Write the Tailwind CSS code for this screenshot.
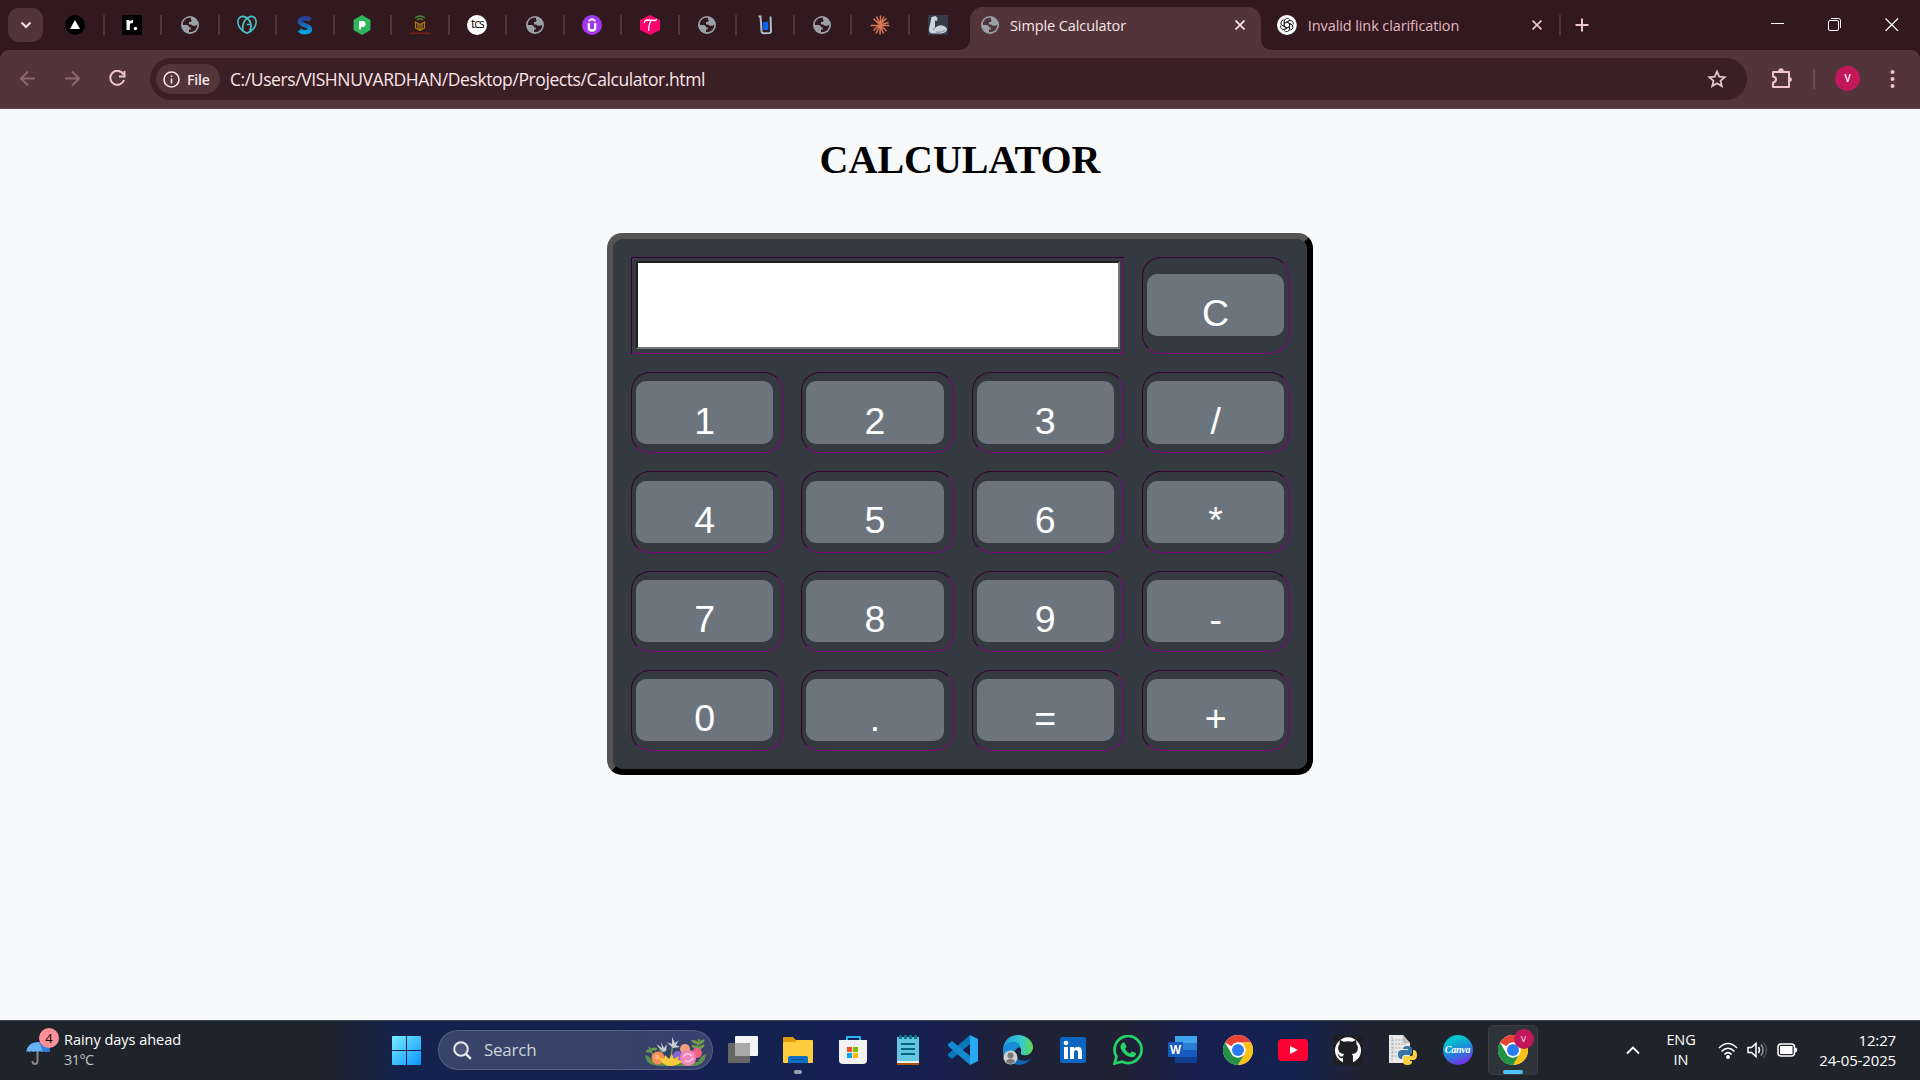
<!DOCTYPE html>
<html lang="en">
<head>
<meta charset="utf-8">
<title>Simple Calculator</title>
<script src="https://cdn.jsdelivr.net/npm/@tailwindcss/browser@4"></script>
</head>
<body class="w-[1920px] h-[1080px] overflow-hidden flex flex-col bg-[#f8f9fb] font-['Open_Sans','Noto_Sans',sans-serif]">

<!-- Shared icon symbols -->
<svg class="hidden">
  <symbol id="globe" viewBox="0 0 18 18"><circle cx="9" cy="9" r="9" fill="#9aa0a6"/><path d="M10 1.8C6.500 1 3 3.200 2 6.500c-.3 1-.2 1.900.1 2.500h3.200c1.800 0 2.900.900 2.900 2.400h1.600v2H8v2.600c3.500.6 7-1.600 8-5 .3-.9.200-1.700.1-2.500l-1.300 1.300h-3.100L10.300 8.400H8V6h1.500l1.700-2H10z" fill="#31191f"/></symbol>
  <symbol id="globe-active" viewBox="0 0 18 18"><circle cx="9" cy="9" r="9" fill="#9aa0a6"/><path d="M10 1.8C6.500 1 3 3.200 2 6.500c-.3 1-.2 1.900.1 2.500h3.200c1.800 0 2.900.900 2.900 2.400h1.600v2H8v2.600c3.500.6 7-1.600 8-5 .3-.9.200-1.700.1-2.500l-1.300 1.300h-3.100L10.300 8.400H8V6h1.500l1.700-2H10z" fill="#51353a"/></symbol>
  <symbol id="chrome" viewBox="0 0 30 30"><circle cx="15" cy="15" r="15" fill="#fff"/><path d="M15 0c5.600 0 10.400 3 13 7.500H15a7.500 7.500 0 0 0-6.500 3.800L2 7.500A15 15 0 0 1 15 0z" fill="#ea4335"/><path d="M28 7.500A15 15 0 0 1 15 30l6.500-11.300A7.500 7.500 0 0 0 21.500 11.200L20 7.500z" fill="#fbc116"/><path d="M2 7.500l6.500 11.200A7.500 7.500 0 0 0 21.500 18.700L15 30A15 15 0 0 1 2 7.500z" fill="#229342"/><circle cx="15" cy="15" r="7.500" fill="#fff"/><circle cx="15" cy="15" r="6" fill="#2b7cf0"/></symbol>
</svg>

<!-- Tab strip -->
<header class="h-[50px] shrink-0 bg-[#31191f] flex">
  <div class="w-[47px] shrink-0 pl-2 pt-2">
    <button class="w-[35px] h-[34px] rounded-[11px] bg-[#51353a] flex items-center justify-center"><svg class="size-3" viewBox="0 0 12 12" fill="none" stroke="#fbdfe4" stroke-width="2"><path d="M1.500 3.500L6 8l4.500-4.500"/></svg></button>
  </div>
  <div class="w-[920px] shrink-0 grid grid-cols-16 h-[50px] items-center text-center">
    <div class="flex justify-center h-5 border-r-2 border-[#51353a]"><svg class="size-5" viewBox="0 0 20 20"><circle cx="10" cy="10" r="10" fill="#000"/><path d="M10 5l5 9H5z" fill="#fff"/></svg></div>
    <div class="flex justify-center h-5 border-r-2 border-[#51353a]"><svg class="size-5" viewBox="0 0 20 20"><rect width="20" height="20" rx="1" fill="#000"/><path d="M4.500 5h3v1.500Q8.500 4.800 11 5v3Q7.800 7.700 7.800 10v5H4.500z" fill="#fff"/><circle cx="13.500" cy="13.500" r="1.700" fill="#fff"/></svg></div>
    <div class="flex justify-center items-center h-5 border-r-2 border-[#51353a]"><svg class="size-[18px]"><use href="#globe"/></svg></div>
    <div class="flex justify-center h-5 border-r-2 border-[#51353a]"><svg class="size-5" viewBox="0 0 20 20" fill="none" stroke="#4cc3c9" stroke-width="1.700"><path d="M10 3C7.500.8 4 .8 2.300 2.800 0 5.500.9 10 3.200 13.300 5 15.800 7.500 17.300 10 18.200c2.500-.9 5-2.400 6.800-4.900C19.100 10 20 5.500 17.700 2.800 15.500.5 11 1.300 8.500 4.600 6 8 5.200 12 6.300 14.600"/><path d="M10 3c3 2.500 4.500 6 3.900 9.500-.2 1.300-.5 2-1.200 2.900M9.800 9.500h3.500"/></svg></div>
    <div class="flex justify-center h-5 border-r-2 border-[#51353a]"><svg class="size-5" viewBox="0 0 20 20"><defs><linearGradient id="sg" x2="0" y2="1"><stop stop-color="#273d91"/><stop offset="1" stop-color="#009fe8"/></linearGradient></defs><path d="M15.500 4.500C13 2.500 5 2.500 5 6.500s10 3.500 10 7.500-8 4-10.500 1" fill="none" stroke="url(#sg)" stroke-width="4.500"/></svg></div>
    <div class="flex justify-center h-5 border-r-2 border-[#51353a]"><svg class="size-5" viewBox="0 0 20 20"><path d="M10 0l8.500 5v10L10 20l-8.500-5V5z" fill="#2fb65a"/><path d="M8 14.500V7h2.500a2 2 0 0 1 0 4H8" fill="#fff" stroke="#fff" stroke-width="2"/></svg></div>
    <div class="flex justify-center h-5 border-r-2 border-[#51353a]"><svg class="size-5" viewBox="0 0 20 20" fill="none"><path d="M5 3q5-4 10 0M7 5q3-2.500 6 0" stroke="#4c8a30" stroke-width="1.300"/><path d="M5.500 7l4.500 2.500L14.500 7v6L10 15.500 5.500 13zM10 9.500V15M8 8.500v5.500M12 8.500v5.500" stroke="#a97912" stroke-width="1.200"/><path d="M0 18.300h20" stroke="#8d1d1b" stroke-width="1.500" stroke-dasharray="1.300 .4"/></svg></div>
    <div class="flex justify-center h-5 border-r-2 border-[#51353a]"><span class="size-5 rounded-full bg-white text-black text-[12px] leading-[18px] tracking-[-1px]">tcs</span></div>
    <div class="flex justify-center items-center h-5 border-r-2 border-[#51353a]"><svg class="size-[18px]"><use href="#globe"/></svg></div>
    <div class="flex justify-center h-5 border-r-2 border-[#51353a]"><svg class="size-5" viewBox="0 0 20 20" fill="none" stroke="#fff"><circle cx="10" cy="10" r="10" fill="#a435f0" stroke="none"/><path d="M6.800 8v5q0 2.500 3.200 2.500t3.200-2.500V8" stroke-width="2.300"/><path d="M6.500 6L10 4l3.500 2" stroke-width="1.700"/></svg></div>
    <div class="flex justify-center h-5 border-r-2 border-[#51353a]"><svg class="size-5" viewBox="0 0 20 20"><path d="M10 0l10 5v10l-10 5-10-5V5z" fill="#fc036f"/><path d="M4.500 8Q4 5 8 5l7 .500Q17 5 16 4M11 5.500Q9 9 8.500 16" fill="none" stroke="#fff" stroke-width="1.300"/></svg></div>
    <div class="flex justify-center items-center h-5 border-r-2 border-[#51353a]"><svg class="size-[18px]"><use href="#globe"/></svg></div>
    <div class="flex justify-center h-5 border-r-2 border-[#51353a]"><svg class="size-5" viewBox="0 0 20 20"><path d="M3.500 1.500h2l1 14.500q0 2.500 2.500 2.300l5-.3q2.300-.2 2-2.500L15.500 1.500" fill="none" stroke="#adbdc9" stroke-width="2"/><path d="M7.500 7.500l5.500-1 .5 8.500H8.300z" fill="#0768f6"/></svg></div>
    <div class="flex justify-center items-center h-5 border-r-2 border-[#51353a]"><svg class="size-[18px]"><use href="#globe"/></svg></div>
    <div class="flex justify-center h-5 border-r-2 border-[#51353a]"><svg class="size-5" viewBox="0 0 20 20" stroke="#d97757" stroke-width="1.500"><path d="M10.500 .5L10 19.500M.5 10.500h19M3.500 3.800L16.500 16M16.500 3.300L3.500 15.500M6.500 1.500L13.500 18.500M14 1.500L6 18.500M18.500 7.500L10 10"/></svg></div>
    <div class="flex justify-center h-5"><svg class="size-5" viewBox="0 0 20 20"><path d="M0 0h20v20H0z" fill="#353b4a"/><path d="M3.500 2l4-1 2 2-.5 3-2-.5L7 13q3-3.500 7.500-2.500 4 1 4.500 4-.5 3.500-6 4H4q-3-.5-3-4.500z" fill="#c9d4db"/><path d="M7 13l-2 2M8 17q6 1 9-2" stroke="#91a2b0" stroke-width="1.300" fill="none"/></svg></div>
  </div>
  <div class="relative ml-[3px] mt-[7px] w-[291px] h-[43px] shrink-0 rounded-t-[13px] bg-[#51353a] flex items-center pl-[11px] pb-[7px]">
    <svg class="absolute -left-3 bottom-0 size-3" viewBox="0 0 12 12"><path d="M12 0v12H0Q12 12 12 0z" fill="#51353a"/></svg>
    <svg class="absolute -right-3 bottom-0 size-3" viewBox="0 0 12 12"><path d="M0 0v12h12Q0 12 0 0z" fill="#51353a"/></svg>
    <svg class="size-[18px]"><use href="#globe-active"/></svg>
    <span class="ml-[11px] w-[225px] pt-0.5 text-[14.500px] tracking-[-0.1px] text-[#fbe5e8]">Simple Calculator</span>
    <svg class="size-[10px] shrink-0" viewBox="0 0 10 10" stroke="#fbe5e8" stroke-width="1.700"><path d="M.5.5l9 9M9.500.5l-9 9"/></svg>
  </div>
  <div class="ml-4 w-[284px] h-[50px] shrink-0 flex items-center">
    <svg class="size-5" viewBox="0 0 20 20" fill="none" stroke="#222" stroke-width=".9"><circle cx="10" cy="10" r="10" fill="#fff" stroke="none"/><g id="knot"><path d="M7.300 11.500V6.200a3 3 0 0 1 5.400-1.700M7.300 8.500l4.500-2.600a3 3 0 0 1 2.300-.3"/></g><use href="#knot" transform="rotate(60 10 10)"/><use href="#knot" transform="rotate(120 10 10)"/><use href="#knot" transform="rotate(180 10 10)"/><use href="#knot" transform="rotate(240 10 10)"/><use href="#knot" transform="rotate(300 10 10)"/></svg>
    <span class="ml-[11px] w-[225px] pt-0.5 text-[14.500px] tracking-[-0.1px] text-[#e5b8c3]">Invalid link clarification</span>
    <svg class="ml-[1px] size-[10px]" viewBox="0 0 10 10" stroke="#f2c4ce" stroke-width="1.700"><path d="M.5.5l9 9M9.500.5l-9 9"/></svg>
    <span class="ml-[17px] w-0.5 h-5 bg-[#51353a]"></span>
  </div>
  <svg class="ml-[14px] mt-[18px] size-[14px]" viewBox="0 0 14 14" stroke="#f2c4ce" stroke-width="2"><path d="M7 .5v13M.5 7h13"/></svg>
  <div class="ml-auto mr-[21px] mt-[17px] flex gap-[43px]">
    <svg class="size-[14px]" viewBox="0 0 14 14" stroke="#fff"><path d="M0 6.500h13"/></svg>
    <svg class="size-[14px]" viewBox="0 0 14 14" fill="none" stroke="#fff"><rect x=".5" y="3.500" width="10" height="10" rx="1.500"/><path d="M3 1.500h7.500q2 0 2 2V11"/></svg>
    <svg class="size-[14px]" viewBox="0 0 14 14" stroke="#fff" stroke-width="1.200"><path d="M.5 1.500l12.500 12.500M13 1.500L.5 14"/></svg>
  </div>
</header>

<!-- Toolbar -->
<div class="h-[59px] shrink-0 bg-[#31191f]">
  <div class="h-[59px] rounded-t-[9px] bg-[#51353a] flex items-start border-b border-[#5d464b]">
    <div class="w-[150px] pl-[19px] pt-5 flex gap-[28px] shrink-0">
      <svg class="size-[17px]" viewBox="0 0 17 17" fill="none" stroke="#8b6870" stroke-width="2"><path d="M16 8.500H2M9 1.500l-7 7 7 7"/></svg>
      <svg class="size-[17px]" viewBox="0 0 17 17" fill="none" stroke="#8b6870" stroke-width="2"><path d="M1 8.500h14M8 1.500l7 7-7 7"/></svg>
      <svg class="size-[17px]" viewBox="0 0 17 17" fill="none" stroke="#f2c4ce" stroke-width="2"><path d="M14.500 4.500A7 7 0 1 0 15 10M15.500 1v5.500H10"/></svg>
    </div>
    <div class="mt-2 w-[1597px] h-[42px] shrink-0 rounded-full bg-[#3a1f25] flex items-center pl-1.5">
      <div class="w-[64px] h-[30px] rounded-full bg-[#51353a] flex items-center pl-[7px] gap-[7px] text-[14px] font-semibold tracking-[-0.2px] text-[#fbe5e8]"><svg class="size-[17px]" viewBox="0 0 17 17" fill="none" stroke="#fbe5e8" stroke-width="1.600"><circle cx="8.500" cy="8.500" r="7.500"/><path d="M8.500 7.500v5M8.500 4.500v1.600"/></svg>File</div>
      <span class="ml-[10px] text-[17.500px] tracking-[-0.41px] text-[#fbe5e8] whitespace-nowrap">C:/Users/VISHNUVARDHAN/Desktop/Projects/Calculator.html</span>
      <svg class="ml-auto mr-5 size-5" viewBox="0 0 20 20" fill="none" stroke="#dfc8cc" stroke-width="1.800"><path d="M10 2.500l2.200 5.100 5.500.5-4.200 3.600 1.300 5.400L10 14.200l-4.800 2.900 1.300-5.400-4.200-3.600 5.500-.5z"/></svg>
    </div>
    <svg class="ml-6 mt-[18px] size-[21px]" viewBox="0 0 21 21" fill="none" stroke="#f2c4ce" stroke-width="2"><path d="M2 4h16v15H2v-4.500q3-.5 3-3T2 8.500z" stroke-linejoin="round"/><path d="M7.300 3a2.700 2.700 0 0 1 5.400 0M18.500 9a2.500 2.500 0 0 1 0 5" fill="#f2c4ce" stroke="none"/></svg>
    <span class="ml-[21px] mt-[19px] w-0.5 h-5 bg-[#6d4e54]"></span>
    <span class="ml-5 mt-4 size-[25px] rounded-full bg-[#c2185b] text-white text-[10px] font-semibold leading-[24px] text-center">V</span>
    <svg class="ml-[30px] mt-[19px] w-[5px] h-5" viewBox="0 0 5 20" fill="#f2c4ce"><circle cx="2.500" cy="3" r="2"/><circle cx="2.500" cy="10" r="2"/><circle cx="2.500" cy="17" r="2"/></svg>
  </div>
</div>

<!-- Calculator page -->
<main class="h-[911px] shrink-0 flex flex-col items-center">
  <h1 class="mt-[28px] h-[46px] leading-[46px] text-[40px] font-bold text-black font-['Liberation_Serif',serif]">CALCULATOR</h1>
  <div class="mt-[50px] w-[706px] h-[542px] rounded-[15px] border-6 border-t-[#555] border-l-[#555] border-r-black border-b-black bg-[#343a40] p-[18px] grid grid-cols-[152.300px_152.300px_152.300px_147px] grid-rows-[97px_repeat(4,81.250px)] gap-[18px] text-[37.500px] leading-[43px] text-white font-['Liberation_Sans',Arial,sans-serif]">
    <div class="col-span-3 border border-t-[#330033] border-l-[#330033] border-r-[#800080] border-b-[#800080] pl-1 py-[3px]"><input class="block w-[484px] h-[88px] bg-white border-2 border-t-[#212121] border-l-[#212121] border-r-[#767676] border-b-[#767676]" type="text" readonly></div>
    <div class="rounded-[19px] border border-t-[#330033] border-l-[#330033] border-r-[#800080] border-b-[#800080] pl-1 flex items-center"><button class="w-[137.500px] h-[62px] -mt-px rounded-[10px] bg-[#6c757d] pt-[17px]">C</button></div>
    <div class="rounded-[19px] border border-t-[#330033] border-l-[#330033] border-r-[#800080] border-b-[#800080] pl-1 flex items-center"><button class="w-[137.300px] h-[62.500px] rounded-[10px] bg-[#6c757d] pt-[17px]">1</button></div>
    <div class="rounded-[19px] border border-t-[#330033] border-l-[#330033] border-r-[#800080] border-b-[#800080] pl-1 flex items-center"><button class="w-[137.300px] h-[62.500px] rounded-[10px] bg-[#6c757d] pt-[17px]">2</button></div>
    <div class="rounded-[19px] border border-t-[#330033] border-l-[#330033] border-r-[#800080] border-b-[#800080] pl-1 flex items-center"><button class="w-[137.300px] h-[62.500px] rounded-[10px] bg-[#6c757d] pt-[17px]">3</button></div>
    <div class="rounded-[19px] border border-t-[#330033] border-l-[#330033] border-r-[#800080] border-b-[#800080] pl-1 flex items-center"><button class="w-[137.500px] h-[62.500px] rounded-[10px] bg-[#6c757d] pt-[17px]">/</button></div>
    <div class="rounded-[19px] border border-t-[#330033] border-l-[#330033] border-r-[#800080] border-b-[#800080] pl-1 flex items-center"><button class="w-[137.300px] h-[62.500px] rounded-[10px] bg-[#6c757d] pt-[17px]">4</button></div>
    <div class="rounded-[19px] border border-t-[#330033] border-l-[#330033] border-r-[#800080] border-b-[#800080] pl-1 flex items-center"><button class="w-[137.300px] h-[62.500px] rounded-[10px] bg-[#6c757d] pt-[17px]">5</button></div>
    <div class="rounded-[19px] border border-t-[#330033] border-l-[#330033] border-r-[#800080] border-b-[#800080] pl-1 flex items-center"><button class="w-[137.300px] h-[62.500px] rounded-[10px] bg-[#6c757d] pt-[17px]">6</button></div>
    <div class="rounded-[19px] border border-t-[#330033] border-l-[#330033] border-r-[#800080] border-b-[#800080] pl-1 flex items-center"><button class="w-[137.500px] h-[62.500px] rounded-[10px] bg-[#6c757d] pt-[17px]">*</button></div>
    <div class="rounded-[19px] border border-t-[#330033] border-l-[#330033] border-r-[#800080] border-b-[#800080] pl-1 flex items-center"><button class="w-[137.300px] h-[62.500px] rounded-[10px] bg-[#6c757d] pt-4">7</button></div>
    <div class="rounded-[19px] border border-t-[#330033] border-l-[#330033] border-r-[#800080] border-b-[#800080] pl-1 flex items-center"><button class="w-[137.300px] h-[62.500px] rounded-[10px] bg-[#6c757d] pt-4">8</button></div>
    <div class="rounded-[19px] border border-t-[#330033] border-l-[#330033] border-r-[#800080] border-b-[#800080] pl-1 flex items-center"><button class="w-[137.300px] h-[62.500px] rounded-[10px] bg-[#6c757d] pt-4">9</button></div>
    <div class="rounded-[19px] border border-t-[#330033] border-l-[#330033] border-r-[#800080] border-b-[#800080] pl-1 flex items-center"><button class="w-[137.500px] h-[62.500px] rounded-[10px] bg-[#6c757d] pt-4">-</button></div>
    <div class="rounded-[19px] border border-t-[#330033] border-l-[#330033] border-r-[#800080] border-b-[#800080] pl-1 flex items-center"><button class="w-[137.300px] h-[62px] -mt-px rounded-[10px] bg-[#6c757d] pt-[17px]">0</button></div>
    <div class="rounded-[19px] border border-t-[#330033] border-l-[#330033] border-r-[#800080] border-b-[#800080] pl-1 flex items-center"><button class="w-[137.300px] h-[62px] -mt-px rounded-[10px] bg-[#6c757d] pt-[17px]">.</button></div>
    <div class="rounded-[19px] border border-t-[#330033] border-l-[#330033] border-r-[#800080] border-b-[#800080] pl-1 flex items-center"><button class="w-[137.300px] h-[62px] -mt-px rounded-[10px] bg-[#6c757d] pt-[17px]">=</button></div>
    <div class="rounded-[19px] border border-t-[#330033] border-l-[#330033] border-r-[#800080] border-b-[#800080] pl-1 flex items-center"><button class="w-[137.500px] h-[62px] -mt-px rounded-[10px] bg-[#6c757d] pt-[17px]">+</button></div>
  </div>
</main>

<!-- Taskbar -->
<footer class="h-[60px] shrink-0 border-t border-[#3c4654] flex items-center pb-px bg-[linear-gradient(90deg,#1f242b_0px,#1e242e_330px,#14234e_400px,#14234e_620px,#161f55_680px,#14234e_760px,#161f55_840px,#171f50_930px,#1e2136_1010px,#202234_1120px,#161f50_1200px,#14234e_1300px,#1f2231_1360px,#1f242b_1420px)]">
  <div class="w-[379px] shrink-0 flex h-[58px]">
    <div class="relative w-[64px] h-[58px]">
      <svg class="absolute left-[25px] top-[17px] w-[27px] h-[28px]" viewBox="0 0 27 28"><path d="M12.500 12v11q0 3-2.500 3t-2.500-3" fill="none" stroke="#8b8583" stroke-width="2"/><path d="M1 14Q3 4 13 4t12 10q-2-1.500-4 0-2-1.500-4 0-2-1.500-4.500 0-2-1.500-4 0-2-1.500-4 0-2-1.500-3.500 0z" fill="#68b2f7"/><path d="M13 4q12 0 12 10-2-1.500-4 0-2-1.500-4 0Q17 7 13 4z" fill="#2c83dc"/></svg>
      <span class="absolute left-[39px] top-[7px] size-5 rounded-full bg-[#ff8f98] text-[13px] leading-5 text-center text-black">4</span>
    </div>
    <div class="pt-[9px] text-[14.500px] leading-5 tracking-[-0.03px] text-white whitespace-nowrap">Rainy days ahead<div class="text-[#c4c5c8] tracking-[-0.600px]">31°C</div></div>
  </div>
  <div class="w-[55px] shrink-0 flex justify-center"><svg class="size-[29px]" viewBox="0 0 29 29"><defs><linearGradient id="win" x2="1" y2="1"><stop stop-color="#76edff"/><stop offset="1" stop-color="#0a94fc"/></linearGradient></defs><path d="M1 0h13v14H0V1q0-1 1-1zM15 0h13q1 0 1 1v13H15zM0 15h14v14H1q-1 0-1-1zM15 15h14v13q0 1-1 1H15z" fill="url(#win)"/></svg></div>
  <div class="ml-1 w-[275px] h-[40px] shrink-0 rounded-full border border-white/15 bg-white/15 flex items-center pl-[14px] pr-1.5">
    <svg class="size-[19px]" viewBox="0 0 19 19" fill="#ffffff18" stroke="#e9eaf0" stroke-width="2"><circle cx="8" cy="8" r="6.800"/><path d="M12.800 12.800l5 5" stroke-width="2.500"/></svg>
    <span class="ml-3 text-[17px] tracking-[-0.25px] text-[#d0d3de]">Search</span>
    <svg class="ml-auto mt-1 w-[61px] h-[30px]" viewBox="0 0 61 30"><path d="M0 18q4 0 8 7l45 0q3-7 8-8-1 12-14 12H16Q1 29 0 18z" fill="#5d8f4b"/><path d="M12 26L4 10M51 18l3-16M26 20l2-15M18 18L13 8" stroke="#6f9b4c" stroke-width="1.500"/><g fill="#6f9b4c"><ellipse cx="4" cy="14" rx="3" ry="1.500"/><ellipse cx="9" cy="12" rx="3" ry="1.500"/><ellipse cx="50" cy="5" rx="4" ry="1.600" transform="rotate(25 50 5)"/><ellipse cx="56" cy="5" rx="4" ry="1.600" transform="rotate(-30 56 5)"/><ellipse cx="50" cy="10" rx="4" ry="1.600" transform="rotate(25 50 10)"/><ellipse cx="56" cy="10" rx="4" ry="1.600" transform="rotate(-30 56 10)"/></g><path d="M18 15L11 7l6 4-1-6 3 6 3-4-1 7zM28 11l-6-6 5 2 0-7 3 6 4-3-3 5 4 2z" fill="#c9cbd2"/><circle cx="33" cy="19" r="5" fill="#8264d2"/><circle cx="40" cy="12" r="5" fill="#f3a17c"/><circle cx="52" cy="16" r="5" fill="#f0627e"/><circle cx="13" cy="21" r="6.500" fill="#f48f54"/><circle cx="12" cy="20" r="2.500" fill="#ffb07a"/><circle cx="43" cy="21" r="8" fill="#f083b8"/><path d="M38 20q4-6 9-1M40 24q5 2 8-3" stroke="#ffc1dc" stroke-width="2" fill="none"/><path d="M13 20l6 2 1-4 4 4 3-5 2 5 5-3-1 4 5 1q-6 5-13 5t-12-9z" fill="#f6ca3b"/></svg>
  </div>
  <div class="ml-[2px] w-[825px] h-[58px] shrink-0 grid grid-cols-15 place-items-center">
    <svg class="size-[30px]" viewBox="0 0 30 30"><rect y="8" width="22" height="20" rx="1" fill="#666"/><rect x="7" y="1" width="23" height="20" rx="1" fill="#f4f4f4"/><path d="M7 8h15v13H7z" fill="#aaa"/></svg>
    <div class="relative size-[30px]"><svg class="size-[30px]" viewBox="0 0 30 30"><path d="M0 3q0-1 1-1h9l3 3h10v7H0z" fill="#dd9c08"/><path d="M12 7l2-2h15q1 0 1 1v21q0 1-1 1H1q-1 0-1-1V8q0-1 1-1z" fill="#ffcc3d"/><path d="M5 28v-5q0-2 2-2h16q2 0 2 2v5z" fill="#0c70c4"/><path d="M8 24.500h13" stroke="#0a4b8c"/></svg><span class="absolute left-[11px] top-[35px] w-2 h-1 rounded-full bg-[#9a9fac]"></span></div>
    <svg class="size-[30px]" viewBox="0 0 30 30"><path d="M9 7V2h13v5" fill="none" stroke="#22b7f1" stroke-width="2"/><path d="M1 5h28v20q0 4-4 4H5q-4 0-4-4z" fill="#f2f2f2"/><path d="M9 12h5v5H9z" fill="#f25022"/><path d="M15 12h5v5h-5z" fill="#7fba00"/><path d="M9 18h5v5H9z" fill="#00a4ef"/><path d="M15 18h5v5h-5z" fill="#ffb900"/></svg>
    <svg class="size-[30px]" viewBox="0 0 30 30"><path d="M4 2h22v25H4z" fill="#62c8e0"/><path d="M4 26h22v2H4z" fill="#eee"/><path d="M4 28h22v2H4z" fill="#a9550b"/><path d="M8 9h14M8 14h14M8 19h14" stroke="#08637f" stroke-width="2"/><path d="M7.500 0v4M12.500 0v4M17.500 0v4M22.500 0v4" stroke="#13708e" stroke-width="3"/></svg>
    <svg class="size-[30px]" viewBox="0 0 30 30"><path d="M22 0v9L4 24l-4-3v-2z" fill="#0877b9"/><path d="M22 30v-9L4 6 0 9v2z" fill="#1389cf"/><path d="M22 0l8 4v22l-8 4z" fill="#29a8f3"/></svg>
    <svg class="size-[30px]" viewBox="0 0 30 30"><defs><linearGradient id="ed" x2="1"><stop stop-color="#1b9ee2"/><stop offset=".6" stop-color="#36c8d0"/><stop offset="1" stop-color="#62db4b"/></linearGradient></defs><path d="M0 14C1 5 7 0 15 0s15 6 15 12-5 9-10 8c-4-1-1-3-2-6-1-4-10-7-18 0z" fill="url(#ed)"/><path d="M0 14c3-8 16-9 17-2-6 1-7 7-3 11 4 4 11 3 14 0-4 7-12 8-17 6C4 27 0 21 0 14z" fill="#0c65b5"/><path d="M0 14c3-8 16-9 17-2-7 2-7 9-4 13l-8 1q-6-5-5-12z" fill="#188cd7"/><circle cx="7.500" cy="22.500" r="7" fill="#d0d0d0"/><circle cx="7.500" cy="20.500" r="3" fill="#777"/><path d="M3 27q0-3 4.500-3t4.500 3q-4 4-9 0z" fill="#777"/></svg>
    <svg class="size-[26px]" viewBox="0 0 26 26"><rect width="26" height="26" rx="2" fill="#0a66c2"/><circle cx="6" cy="6" r="2.300" fill="#fff"/><path d="M4 10h4v12H4zM10 10h4v1.700q1.300-2 4-2 4 0 4 5.300v7h-4v-6.500q0-2.500-2-2.500t-2 2.500V22h-4z" fill="#fff"/></svg>
    <svg class="size-[30px]" viewBox="0 0 30 30"><path d="M1.500 28.500l2-7A13.500 13.500 0 1 1 9 26.600z" fill="none" stroke="#25d366" stroke-width="2.700"/><path d="M10 7.500h1.500l2 4.200-1.500 2.300q2 3.500 5 4.500l2-2.200 4 2q0 4-4.500 4C12 21.500 7 15 7.500 11q.3-2.500 2.500-3.500z" fill="#25d366"/></svg>
    <svg class="size-[30px]" viewBox="0 0 30 30"><path d="M7 1h22v7H7z" fill="#41a5ee"/><path d="M7 8h22v7H7z" fill="#2b7cd3"/><path d="M7 15h22v7H7z" fill="#185abd"/><path d="M7 22h22v6H7z" fill="#103f91"/><rect y="7" width="15" height="15" rx="1" fill="#185abd"/><text x="7.500" y="18.500" text-anchor="middle" font-family="Open Sans" font-size="11.500" font-weight="700" fill="#fff">W</text></svg>
    <svg class="size-[30px]"><use href="#chrome"/></svg>
    <svg class="w-[30px] h-[22px]" viewBox="0 0 30 22"><rect width="30" height="22" rx="4" fill="#f03"/><path d="M12 7l8 4-8 4z" fill="#fff"/></svg>
    <svg class="size-[30px]" viewBox="0 0 30 30"><path d="M0 0h30v30H0z" fill="#201e22"/><path d="M10 27.300A13 13 0 1 1 20 27.300V22q0-2-1.200-3c4-.4 6-2 6-6 0-2-.5-3-1.500-4 .3-1.500.2-2.500-.3-3.700-1 0-2 .5-3.500 1.500q-4.500-1-9 0C9 5.800 8 5.300 7 5.300 6.500 6.500 6.400 7.500 6.700 9c-1 1-1.500 2-1.500 4 0 4 2 5.600 6 6q-1 1-1.200 2.300c-2 .8-3 0-4-1.300q-1-1-2-1 1 1 1.500 2 1.500 3 4.500 2z" fill="#fff"/></svg>
    <svg class="size-[30px]" viewBox="0 0 30 30"><path d="M1 0h14l7 8v20H1z" fill="#e9e9e9"/><path d="M4 2v25M4 5h11M4 9h14M4 13h10M4 17h7M4 21h7" stroke="#aaa" stroke-dasharray="2 1"/><path d="M15 0l7 8h-7z" fill="#bcbcbc"/><path d="M15 14q0-3 4.500-3t4.500 3v4q0 2-2 2h-5q-3 0-3 4-4 0-4-4.500t4-4.500h6v-1z" fill="#3774a8"/><path d="M25 15q4 0 4 5t-4 5h-5v1h4v1q0 3-4.500 3t-4.500-3v-4q0-2 2-2h5q3 0 3-2z" fill="#ffd340"/></svg>
    <div class="size-[30px] rounded-full bg-[linear-gradient(160deg,#00c4cc_20%,#2b76df_60%,#7d2ae8_90%)] text-white text-[10px] leading-[29px] text-center italic font-bold font-['Liberation_Serif',serif] tracking-[-0.200px]">Canva</div>
    <div class="relative w-[50px] h-[50px] rounded-[5px] border border-white/5 bg-white/7 flex items-center justify-center"><svg class="size-[30px]"><use href="#chrome"/></svg><span class="absolute left-[25px] top-[3px] size-5 rounded-full bg-[#c2185b] text-[#f4c2d4] text-[9px] leading-5 text-center font-semibold">V</span><span class="absolute left-[14px] bottom-0 w-5 h-1 rounded-full bg-[#4cc2ff]"></span></div>
  </div>
  <svg class="ml-[86px] size-[14px] shrink-0" viewBox="0 0 14 14" fill="none" stroke="#fff" stroke-width="1.800"><path d="M1 10.500l6-6 6 6"/></svg>
  <div class="ml-[21px] w-[40px] shrink-0 text-center text-white text-[14.500px] leading-5 tracking-[-0.1px]">ENG<br>IN</div>
  <svg class="ml-[17px] w-[20px] h-[17px] shrink-0" viewBox="0 0 20 17" fill="none" stroke="#fff" stroke-width="1.600"><path d="M1 6q9-9 18 0M3.500 9.500q6.500-6.500 13 0M6.300 12.500q3.700-3.700 7.400 0"/><circle cx="10" cy="15" r="1.200" fill="#fff"/></svg>
  <svg class="ml-[9px] w-[21px] h-[18px] shrink-0" viewBox="0 0 21 18" fill="none" stroke="#fff" stroke-width="1.500"><path d="M1 6.500h3.500L9 2.500v13l-4.500-4H1zM11.500 6q2 3 0 6"/><path d="M14 3.500q4 5.500 0 11" stroke="#999"/><path d="M16.500 1.500q6 7.500 0 15" stroke="#4a5056"/></svg>
  <svg class="ml-[9px] w-[21px] h-[14px] shrink-0" viewBox="0 0 21 14" fill="none" stroke="#fff" stroke-width="1.500"><rect x="1" y="1" width="16.500" height="12" rx="3"/><path d="M3 3h12.500v8H3z" fill="#fff" stroke="none"/><path d="M18.500 5q2 2 0 4" fill="#fff"/></svg>
  <div class="ml-auto mr-6 text-right text-white text-[15px] leading-5 tracking-[-0.150px]">12:27<br>24-05-2025</div>
</footer>
</body>
</html>
